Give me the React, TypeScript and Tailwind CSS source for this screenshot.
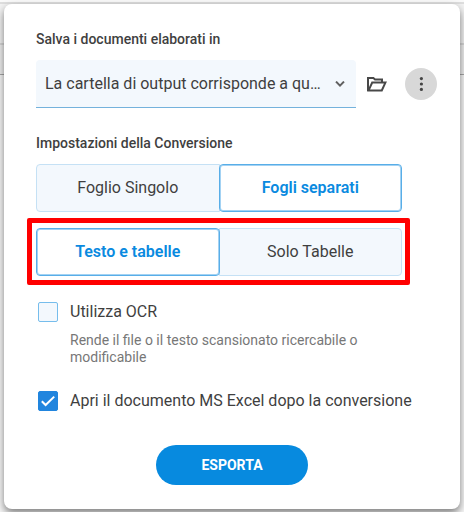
import { useState } from "react";
import clsx from "clsx";

interface SegmentedProps {
    label: string;
    options: string[];
    value: string;
    onChange: (value: string) => void;
}

const Segmented = ({ label, options, value, onChange }: SegmentedProps) => {
    return (
        <div role="group" aria-label={label} className="flex">
            {options.map((option, i) => (
                <button
                    key={option}
                    type="button"
                    aria-pressed={option === value}
                    onClick={() => onChange(option)}
                    className={clsx(
                        "h-12 flex-1 border text-base",
                        i > 0 && "-ml-px",
                        option === value
                            ? "z-10 rounded border-[#58aee8] bg-white font-semibold text-[#0a8ae0] inset-ring inset-ring-[#a3d2f3]"
                            : "border-[#c5e1f5] bg-[#f3f8fd] text-[#3f3f3f]",
                        option !== value && (i === 0 ? "rounded-l" : "rounded-r")
                    )}
                >
                    {option}
                </button>
            ))}
        </div>
    );
};

interface CheckboxProps {
    id: string;
    label: string;
    checked: boolean;
    onChange: (checked: boolean) => void;
}

const Checkbox = ({ id, label, checked, onChange }: CheckboxProps) => {
    return (
        <div className="flex items-center gap-3 pl-0.5">
            <div className="relative h-5 w-5 shrink-0">
                <input
                    id={id}
                    type="checkbox"
                    checked={checked}
                    onChange={(e) => onChange(e.target.checked)}
                    className="block h-5 w-5 appearance-none rounded-xs border border-[#76bdec] bg-[#f3f8fd] checked:border-[#2185de] checked:bg-[#2185de]"
                />
                {checked && (
                    <svg
                        viewBox="0 0 20 20"
                        className="pointer-events-none absolute inset-0 h-5 w-5"
                        fill="none"
                        stroke="#fff"
                        strokeWidth="2"
                    >
                        <path d="M3.8 10.2 L7.6 14 L16.2 5.6" />
                    </svg>
                )}
            </div>
            <label htmlFor={id} className="text-base leading-5 text-[#3f3f3f]">
                {label}
            </label>
        </div>
    );
};

const App = () => {
    const [sheets, setSheets] = useState("Fogli separati");
    const [content, setContent] = useState("Testo e tabelle");
    const [ocr, setOcr] = useState(false);
    const [openAfter, setOpenAfter] = useState(true);

    return (
        <div className="relative flex min-h-screen flex-col bg-[#f0f0f0] px-1 pt-1 pb-[3px] font-[Roboto,sans-serif]">
            {/* page behind the panel */}
            <div className="absolute inset-0 flex flex-col">
                <div className="h-0.5 bg-[#fafafa]" />
                <div className="h-0.5 bg-[#dedede]" />
                <div className="h-[39px] bg-[#f3f3f3]" />
                <div className="h-0.5 bg-[#d8d8d8]" />
                <div className="h-[29px] bg-[#f0f0f0]" />
                <div className="h-px bg-[#a8a8a8]" />
                <div className="flex-1 bg-[#f8f8f8]" />
            </div>

            <form
                className="relative flex-1 rounded-lg bg-white pt-6 pr-[23px] pb-6 pl-8 shadow-[0_4px_8px_rgba(0,0,0,0.5)]"
                onSubmit={(e) => e.preventDefault()}
            >
                <label htmlFor="output" className="block text-sm leading-[22px] font-medium text-[#3f3f3f]">
                    Salva i documenti elaborati in
                </label>
                <div className="mt-2.5 flex items-center">
                    <div className="relative min-w-0 flex-1">
                        <select
                            id="output"
                            className="block h-12 w-full appearance-none rounded-t border-b border-[#74b2dc] bg-[#f3f8fd] pr-8 pl-[9px] text-base text-[#3f3f3f]"
                        >
                            <option>La cartella di output corrisponde a qu…</option>
                        </select>
                        <svg
                            viewBox="0 0 10 6"
                            className="pointer-events-none absolute top-[21px] right-[11px] h-1.5 w-2.5"
                            fill="none"
                            stroke="#606060"
                            strokeWidth="2"
                        >
                            <path d="M1 0.6 L5 4.6 L9 0.6" />
                        </svg>
                    </div>
                    <button type="button" aria-label="Sfoglia" className="ml-[11px]">
                        <svg
                            viewBox="0 0 20 16"
                            className="h-4 w-5"
                            fill="none"
                            stroke="#484848"
                            strokeWidth="2"
                        >
                            <path d="M1 15 V2 H6.4 L8 3.4 H15 V6.4" />
                            <path d="M1.6 14.4 L5.2 6.6 H18.4 L14.8 14.4 Z" />
                        </svg>
                    </button>
                    <button
                        type="button"
                        aria-label="Altro"
                        className="ml-[18px] flex h-8 w-8 items-center justify-center rounded-full bg-[#d8d8d8]"
                    >
                        <svg viewBox="0 0 4 14" className="h-3.5 w-1" fill="#444">
                            <circle cx="2.4" cy="1.6" r="1.6" />
                            <circle cx="2.4" cy="7" r="1.6" />
                            <circle cx="2.4" cy="12.4" r="1.6" />
                        </svg>
                    </button>
                </div>

                <div className="mt-6 mr-[35px]">
                    <h2 className="text-sm leading-[22px] font-medium text-[#3f3f3f]">
                        Impostazioni della Conversione
                    </h2>
                    <div className="mt-2.5">
                        <Segmented
                            label="Fogli"
                            options={["Foglio Singolo", "Fogli separati"]}
                            value={sheets}
                            onChange={setSheets}
                        />
                    </div>
                    <div className="relative mt-4">
                        <Segmented
                            label="Contenuto"
                            options={["Testo e tabelle", "Solo Tabelle"]}
                            value={content}
                            onChange={setContent}
                        />
                        <div className="pointer-events-none absolute -top-2.5 -right-2 -bottom-[9px] -left-[9px] z-20 rounded-xs border-5 border-[#ff0000]" />
                    </div>
                </div>

                <div className="mt-[26px]">
                    <Checkbox id="ocr" label="Utilizza OCR" checked={ocr} onChange={setOcr} />
                    <p className="mt-2.5 mr-10 ml-[34px] text-sm leading-[17px] text-[#777]">
                        Rende il file o il testo scansionato ricercabile o modificabile
                    </p>
                </div>
                <div className="mt-[25px]">
                    <Checkbox
                        id="open"
                        label="Apri il documento MS Excel dopo la conversione"
                        checked={openAfter}
                        onChange={setOpenAfter}
                    />
                </div>

                <div className="mt-[34px] mr-[9px] flex justify-center">
                    <button type="submit" className="h-10 w-[152px] rounded-full bg-[#078adf] text-sm font-bold text-white">
                        ESPORTA
                    </button>
                </div>
            </form>
        </div>
    );
};

export default App;
